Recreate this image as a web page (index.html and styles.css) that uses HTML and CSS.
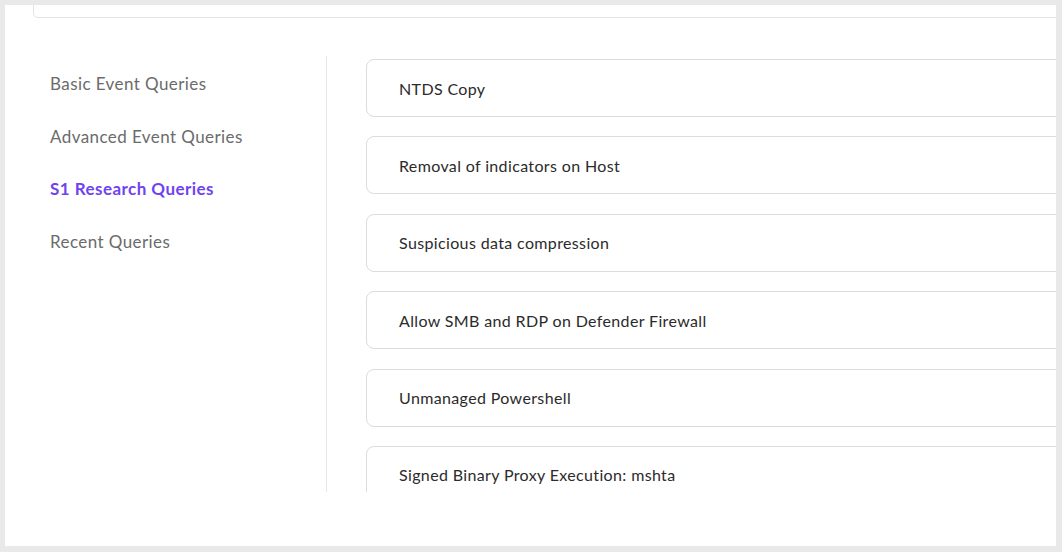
FILE: index.html
```html
<!DOCTYPE html>
<html>
<head>
<meta charset="utf-8">
<link rel="stylesheet" href="styles.css">
</head>
<body>
<div class="panel">
  <div class="top-card"></div>
  <div class="content">
    <nav class="nav">
      <div class="nav-item">Basic Event Queries</div>
      <div class="nav-item">Advanced Event Queries</div>
      <div class="nav-item active">S1 Research Queries</div>
      <div class="nav-item">Recent Queries</div>
    </nav>
    <div class="list">
      <div class="cards">
        <div class="card">NTDS Copy</div>
        <div class="card">Removal of indicators on Host</div>
        <div class="card">Suspicious data compression</div>
        <div class="card">Allow SMB and RDP on Defender Firewall</div>
        <div class="card">Unmanaged Powershell</div>
        <div class="card">Signed Binary Proxy Execution: mshta</div>
      </div>
    </div>
  </div>
</div>
</body>
</html>
```
FILE: styles.css
```css
html, body {
  margin: 0;
  padding: 0;
  background: #e9e9e9;
  font-family: Lato, "Noto Sans", sans-serif;
}
.panel {
  margin: 5px 6px 0 5px;
  height: 541px;
  background: #ffffff;
  overflow: hidden;
}
.top-card {
  margin-left: 28px;
  width: 1100px;
  height: 12px;
  border: 1px solid #e2e2e2;
  border-top: none;
  border-radius: 0 0 5px 5px;
}
.content {
  display: flex;
  margin-top: 38px;
  height: 436px;
}
.nav {
  flex: none;
  width: 276px;
  padding: 1px 0 0 45px;
  border-right: 1px solid #e6e6e6;
}
.nav-item {
  height: 52.7px;
  display: flex;
  align-items: center;
  font-size: 17px;
  letter-spacing: 0.42px;
  color: #6b6b6b;
}
.nav-item.active {
  color: #7043f0;
  font-weight: 700;
  letter-spacing: 0.45px;
}
.list {
  flex: none;
  width: 800px;
  height: 436px;
  overflow: hidden;
  padding-left: 39px;
}
.cards {
  padding-top: 3px;
  display: flex;
  flex-direction: column;
  gap: 19.4px;
}
.card {
  box-sizing: border-box;
  height: 58px;
  border: 1px solid #dcdcdc;
  border-radius: 8px;
  display: flex;
  align-items: center;
  padding-left: 32px;
  padding-top: 0;
  font-size: 16px;
  letter-spacing: 0.36px;
  color: #2b2b2b;
}
```
